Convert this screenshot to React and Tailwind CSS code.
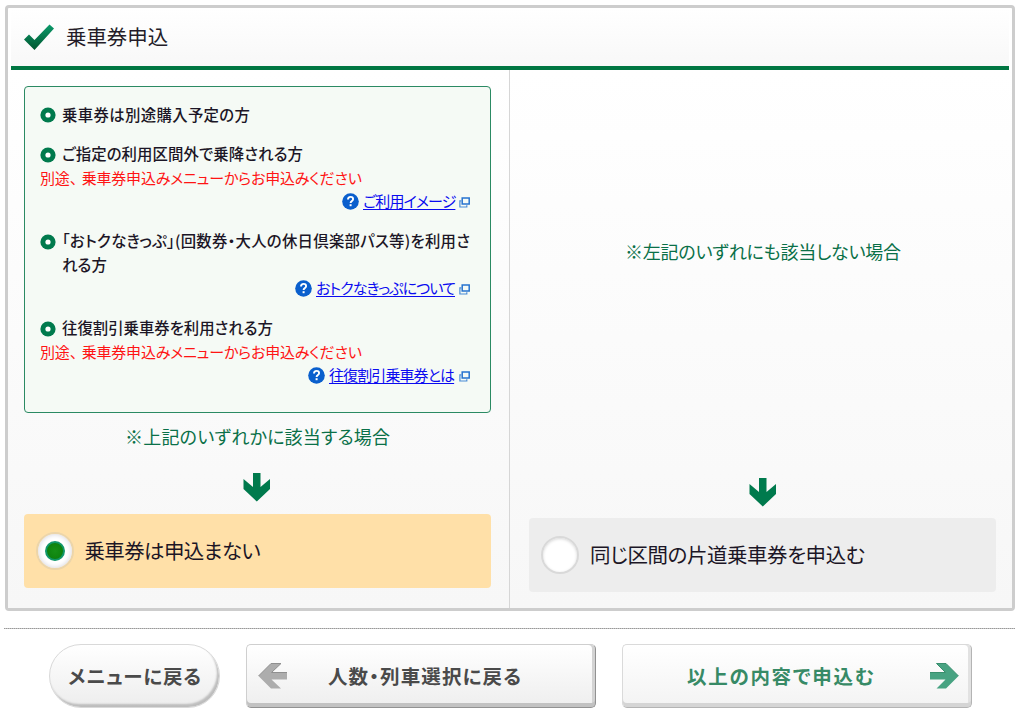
import React from "react";
import clsx from "clsx";

// Proportional kana set across a fixed measure.
function Line({ className, children, as: Tag = "span" }) {
  return (
    <Tag
      className={clsx(
        "block shrink-0 whitespace-nowrap tracking-[-0.06em] [font-feature-settings:'palt'] [text-align-last:justify]",
        className
      )}
    >
      {children}
    </Tag>
  );
}

function CheckIcon() {
  return (
    <svg className="h-[27px] w-[31px] shrink-0" viewBox="0 0 31 27">
      <defs>
        <linearGradient id="check" x1="0" y1="0" x2="0" y2="1">
          <stop offset="0" stopColor="#0b9a6b" />
          <stop offset="1" stopColor="#00562f" />
        </linearGradient>
      </defs>
      <path d="M0 15.5 L5 10.5 L10.5 16 L25.5 0.5 L30 4.5 L10.5 26 Z" fill="url(#check)" />
    </svg>
  );
}

function Bullet() {
  return (
    <svg className="mt-[4.5px] mr-[6px] size-[16px] shrink-0" viewBox="0 0 16 16">
      <circle cx="8" cy="8" r="7.6" fill="#007a4d" />
      <circle cx="8" cy="8" r="2.6" fill="#fff" />
    </svg>
  );
}

function HelpLink({ width, children }) {
  return (
    <div className="flex h-[23.6px] items-center justify-end pr-[6.5px]">
      <svg className="mr-[4px] size-[17px] shrink-0" viewBox="0 0 17 17">
        <circle cx="8.5" cy="8.5" r="8.3" fill="#0a5fcd" />
        <path
          d="M6 6.6 C6 4.6 7.2 3.9 8.6 3.9 C10.1 3.9 11.1 4.8 11.1 6.2 C11.1 8 8.6 8 8.6 10"
          fill="none"
          stroke="#fff"
          strokeWidth="1.9"
        />
        <rect x="7.6" y="11.2" width="2" height="2" fill="#fff" />
      </svg>
      <Line
        as="a"
        className={clsx("-mt-[1px] text-[15px] leading-[20px] text-[#0b0bf0] underline decoration-1 underline-offset-[2px]", width)}
      >
        {children}
      </Line>
      <svg className="mt-[2px] ml-[5px] h-[11px] w-[11px] shrink-0" viewBox="0 0 11 11">
        <rect x="3.2" y="1" width="7" height="6" fill="none" stroke="#2673cf" strokeWidth="1.5" />
        <path d="M2.4 3.8 H0.9 V10 H7.8 V8.2" fill="none" stroke="#4a8bd6" strokeWidth="1.2" />
      </svg>
    </div>
  );
}

function Notice() {
  return (
    <Line className="w-[321px] text-[15px] leading-[23.6px] text-[#ff1414]">
      別途<span className="tracking-[-0.25em] [font-feature-settings:normal]">、</span>乗車券申込みメニューからお申込みください
    </Line>
  );
}

function DownArrow() {
  return (
    <svg className="h-[29px] w-[28px]" viewBox="0 0 28 29">
      <path d="M10 0 H17.5 V14 L27 6 V16 L13.8 28.6 L0.5 16 V6 L10 14 Z" fill="#007a4d" />
    </svg>
  );
}

function Option({ checked, width, children }) {
  return (
    <label
      className={clsx(
        "flex h-[74px] w-[467px] items-center rounded-[4px] pl-[12px] text-[20.5px] text-[#1c1626]",
        checked ? "bg-[#ffe0a8]" : "bg-[#ededed]"
      )}
    >
      <span
        className={clsx(
          "mr-[11px] flex size-[38px] shrink-0 items-center justify-center rounded-full border-2 bg-white",
          checked
            ? "border-[#ecd5aa] shadow-[inset_0_0_4px_1px_#dddde4]"
            : "border-[#d9d9d9] shadow-[inset_0_1px_3px_#d8d8d8]"
        )}
      >
        {checked && <span className="size-[20px] rounded-full border-2 border-[#12976a] bg-radial from-[#168f16] to-[#0a7d0a]" />}
      </span>
      <Line className={clsx("-mt-[2px]", width)}>{children}</Line>
    </label>
  );
}

export default function App() {
  return (
    <div className="h-[728px] w-[1024px] overflow-hidden bg-white pt-[5px] pl-[5px] font-['Noto_Sans_CJK_JP','Noto_Sans',sans-serif]">
      <section className="flex h-[606px] w-[1010px] flex-col rounded-[4px] border-3 border-[#cdcdcd] px-[3px]">
        <header className="mt-[1px] flex h-[61px] shrink-0 items-center border-b-4 border-[#007642] bg-linear-to-b from-white to-[#f8f8f8] pl-[13px]">
          <CheckIcon />
          <Line as="h1" className="-mt-[2px] ml-[11px] w-[101px] text-[20.5px] text-[#241c28]">
            乗車券申込
          </Line>
        </header>

        <div className="-mx-[3px] flex min-h-0 grow bg-linear-to-b from-white to-[#f7f7f7]">
          <div className="flex w-[502px] flex-col items-center border-r border-[#d6d6d6] pt-[16px] pr-[3px]">
            <ul className="flex h-[327px] w-[467px] shrink-0 flex-col gap-[16.1px] rounded-[4px] border-[1.5px] border-[#2b8a63] bg-[#f5faf5] pt-[15.6px] pr-[13px] pl-[15.5px] text-[15.4px] leading-[23.6px] font-medium text-[#1c1626]">
              <li className="flex">
                <Bullet />
                <Line className="w-[187px]">乗車券は別途購入予定の方</Line>
              </li>
              <li>
                <div className="flex">
                  <Bullet />
                  <Line className="w-[240px]">ご指定の利用区間外で乗降される方</Line>
                </div>
                <div className="font-normal">
                  <Notice />
                  <HelpLink width="w-[91px]">ご利用イメージ</HelpLink>
                </div>
              </li>
              <li>
                <div className="flex">
                  <Bullet />
                  <div>
                    <Line className="w-[407px]">「おトクなきっぷ」(回数券・大人の休日倶楽部パス等)を利用さ</Line>
                    <Line className="w-[44px]">れる方</Line>
                  </div>
                </div>
                <div className="font-normal">
                  <HelpLink width="w-[138px]">おトクなきっぷについて</HelpLink>
                </div>
              </li>
              <li>
                <div className="flex">
                  <Bullet />
                  <Line className="w-[210px]">往復割引乗車券を利用される方</Line>
                </div>
                <div className="font-normal">
                  <Notice />
                  <HelpLink width="w-[125px]">往復割引乗車券とは</HelpLink>
                </div>
              </li>
            </ul>
            <Line className="mt-[11px] w-[264px] text-[18px] leading-[24px] text-[#0a7048]">※上記のいずれかに該当する場合</Line>
            <div className="mt-[25px] mb-[12px]">
              <DownArrow />
            </div>
            <Option checked width="w-[175px]">
              乗車券は申込まない
            </Option>
          </div>

          <div className="flex grow flex-col items-center pt-[169px] pl-[3px]">
            <Line className="w-[275px] text-[18px] leading-[24px] text-[#0a7048]">※左記のいずれにも該当しない場合</Line>
            <div className="mt-[215px] mb-[11px]">
              <DownArrow />
            </div>
            <Option width="w-[274px]">同じ区間の片道乗車券を申込む</Option>
          </div>
        </div>
      </section>

      <div className="mt-[17px] -ml-px h-px w-[1011px] bg-[repeating-linear-gradient(90deg,#999_0_1px,#c4c4c4_1px_2px)]" />

      <nav className="mt-[15px] flex pl-[44px] text-[19.5px] font-bold text-[#4a4a4a]">
        <button className="flex h-[64px] w-[171px] items-center justify-center rounded-full border border-[#d9d9d9] bg-linear-to-b from-white to-[#ededed] pr-[1px] shadow-[inset_-2px_-3px_2px_#bdbdbd]">
          <Line className="w-[132px]">メニューに戻る</Line>
        </button>
        <button className="ml-[26px] flex h-[64px] w-[350px] items-center rounded-[5px] border border-[#cfcfcf] border-r-[#929292] border-b-[#929292] bg-linear-to-b from-white to-[#eeeeee] pl-[11px] shadow-[inset_0_-4px_0_#c2c2c2,inset_-3px_0_0_#d3d3d3]">
          <svg className="mr-[41px] h-[26px] w-[29px]" viewBox="0 0 29 26">
            <path d="M29 9.5 H13.5 L23 0.5 H13 L0.5 13 L13 25.5 H23 L13.5 16.5 H29 Z" fill="#adadad" />
            <path d="M29 9.5 H13.5 L23 0.5 H13 L0.5 13" fill="none" stroke="#8f8f8f" />
          </svg>
          <Line className="w-[192px]">人数・列車選択に戻る</Line>
        </button>
        <button className="ml-[26px] flex h-[64px] w-[350px] items-center rounded-[5px] border border-[#dadada] border-r-[#b4b4b4] border-b-[#b4b4b4] bg-linear-to-b from-white to-[#f3f3f3] pl-[64px] text-[#378a66] shadow-[inset_0_-4px_0_#d5d5d5,inset_-3px_0_0_#e2e2e2]">
          <Line className="w-[186px]">以上の内容で申込む</Line>
          <svg className="ml-[57px] h-[26px] w-[29px]" viewBox="0 0 29 26">
            <path d="M0 9.5 H15.5 L6.5 0.5 H16 L28.5 13 L16 25.5 H6.5 L15.5 16.5 H0 Z" fill="#48a382" />
            <path d="M0 9.5 H15.5 L6.5 0.5 H16 L28.5 13" fill="none" stroke="#398f6e" />
          </svg>
        </button>
      </nav>
    </div>
  );
}
